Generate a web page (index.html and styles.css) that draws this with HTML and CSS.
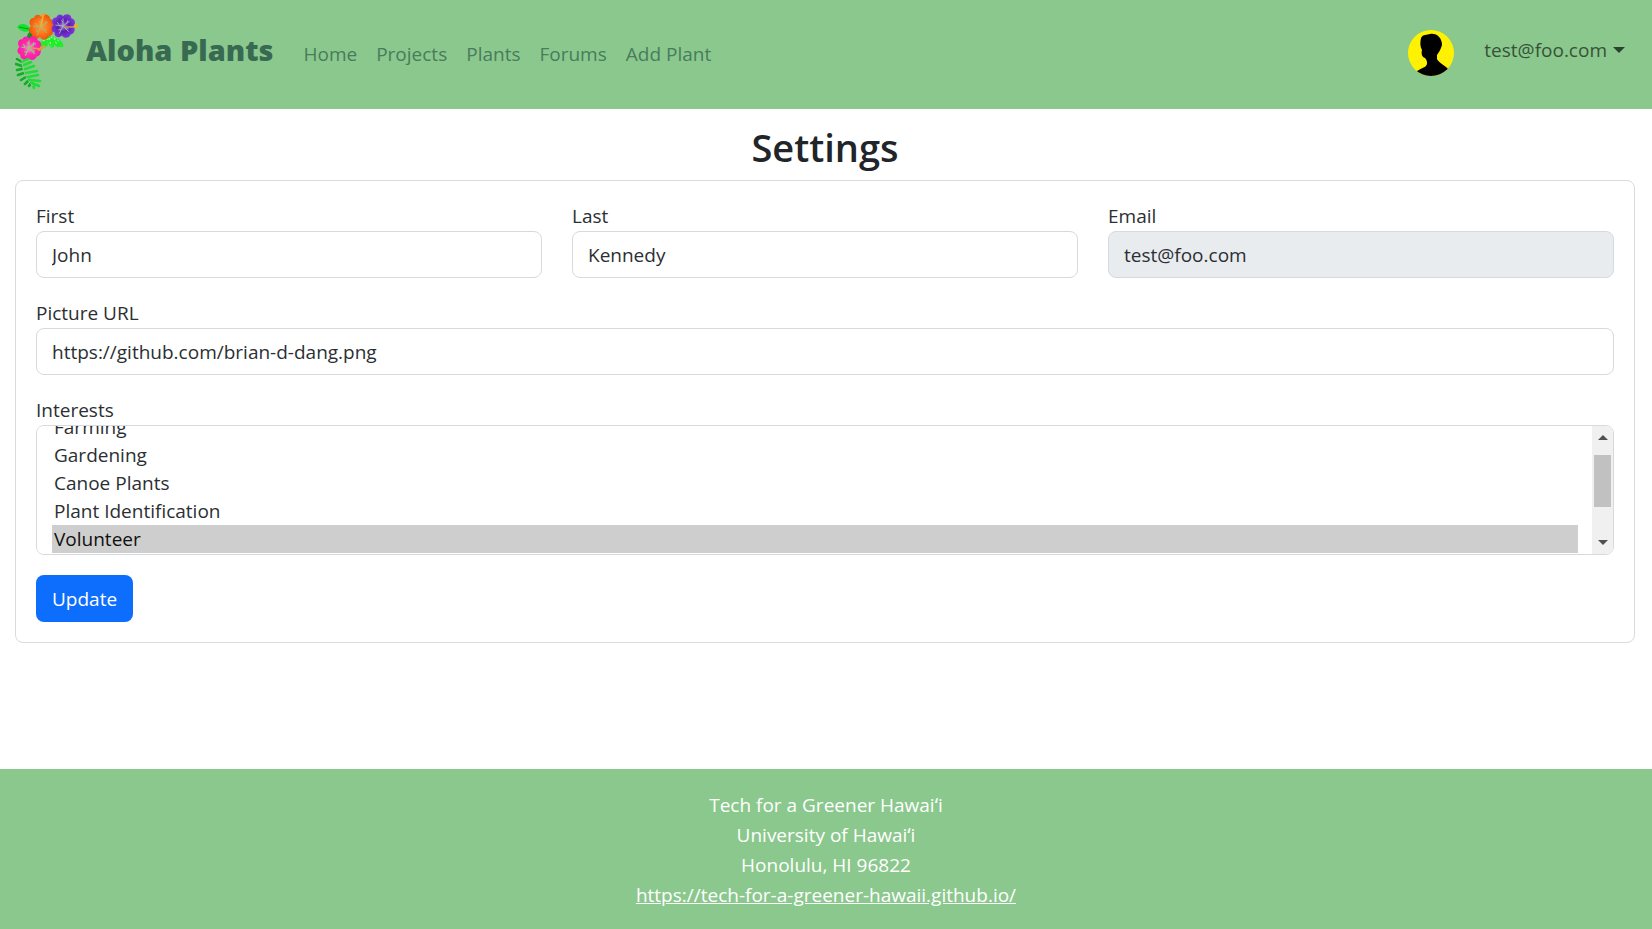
FILE: index.html
```html
<!DOCTYPE html>
<html lang="en">
<head>
<meta charset="utf-8">
<meta name="viewport" content="width=device-width, initial-scale=1">
<title>Aloha Plants</title>
<link rel="stylesheet" href="styles.css">
</head>
<body>
<header class="navbar">
  <a class="brand" href="#">
    <svg class="logo" viewBox="15 12 64 78" aria-hidden="true">
      <defs>
        <radialGradient id="orange"><stop offset="0" stop-color="#f8a040"/><stop offset=".5" stop-color="#ff7a1c"/><stop offset="1" stop-color="#f0560c"/></radialGradient>
        <radialGradient id="purple"><stop offset="0" stop-color="#a98be0"/><stop offset=".45" stop-color="#5a1fb0"/><stop offset="1" stop-color="#7c35dc"/></radialGradient>
        <radialGradient id="pink"><stop offset="0" stop-color="#ff9ad8"/><stop offset=".5" stop-color="#ff2cae"/><stop offset="1" stop-color="#ff1aa8"/></radialGradient>
        <path id="bloom" d="M0-10C2-14 9-13 9-8 13-8 14-2 11 0 14 3 12 9 8 9 7 13 1 14-1 10-5 14-10 11-9 7-13 6-13 1-10-1-13-4-11-10-7-9-6-13-1-13 0-10Z"/>
        <path id="veins" d="M0 0 0-8M0 0 7-5M0 0 6 6M0 0-4 8M0 0-8-1M0-4-2-6M4-3 5-6M3 3 6 3M-2 4-5 4M-4-1-6-4"/>
      </defs>
      <path fill="#12e32c" d="M17 27C20 23 26 23 30 28L30 31C25 33 20 31 17 27Z"/>
      <path fill="#11982c" d="M34 31C30 30 26 34 27 40L33 41C36 37 36 34 34 31Z"/>
      <path stroke="#087d1d" stroke-width=".7" fill="none" d="M19 27 29 29M32 32 29 39"/>
      <g fill="#1fee2b"><ellipse cx="47" cy="38" rx="3" ry="5" transform="rotate(35 47 38)"/><ellipse cx="51" cy="42" rx="3" ry="6" transform="rotate(-18 51 42)"/><ellipse cx="56" cy="42" rx="3" ry="6" transform="rotate(-35 56 42)"/><ellipse cx="60" cy="43" rx="2" ry="5" transform="rotate(-35 60 43)"/><ellipse cx="44" cy="44" rx="4" ry="3"/></g>
      <path fill="none" stroke="#b9f7a5" stroke-dasharray="2 2" d="M43 41 53 37 60 42M49 38 51 46M54 38 57 45"/>
      <g fill="none" stroke-linecap="round" stroke-width="2.6">
        <path stroke="#0faf25" d="M22 62 17 59M22 66 16 64M22 69 17 70M24 73 18 75M26 77 21 80M29 80 25 84M31 83 29 86"/>
        <path stroke="#20dc36" d="M23 61 28 59M24 65 31 62M25 69 34 66M26 73 37 71M28 77 38 75M30 80 40 81M32 83 39 86M33 85 34 88"/>
      </g>
      <path fill="none" stroke="#8bc88d" d="M22 60C22 70 26 79 33 86"/>
      <g transform="translate(41 27)"><use href="#bloom" fill="url(#orange)"/><use href="#veins" stroke="#a4ba72"/></g>
      <path stroke="#f3b12e" stroke-width="1.5" fill="none" d="M41 27 43 16"/><circle cx="43" cy="15" r="1.8" fill="#ff9a1c"/>
      <g transform="translate(63 26) scale(.94)"><use href="#bloom" fill="url(#purple)"/><use href="#veins" stroke="#a6b5b5"/></g>
      <path stroke="#d99155" stroke-width="1.5" fill="none" d="M64 27 74 27"/><circle cx="76" cy="26" r="2" fill="#ffab16"/>
      <g transform="translate(29 48) scale(.95)"><use href="#bloom" fill="url(#pink)"/><use href="#veins" stroke="#9dbf88" stroke-width="1.3"/></g>
      <path stroke="#dd9554" stroke-width="1.5" fill="none" d="M30 48 42 49"/><path stroke="#f2942a" stroke-width="3" stroke-dasharray="2 1" fill="none" d="M38 50 45 46"/>
    </svg>
    <span>Aloha Plants</span>
  </a>
  <nav class="links">
    <a href="#">Home</a><a href="#">Projects</a><a href="#">Plants</a><a href="#">Forums</a><a href="#">Add Plant</a>
  </nav>
  <div class="account">
    <svg class="avatar" viewBox="0 0 46 46" aria-hidden="true">
      <defs><clipPath id="round"><circle cx="23" cy="23" r="23"/></clipPath></defs>
      <g clip-path="url(#round)"><path fill="#fff200" d="M0 0H46V46H0Z"/>
      <path fill="none" stroke="#f5dc4a" stroke-width=".6" d="M4 34 16 27M32 28H46M35 20 42 11"/>
      <path d="M13 8C15 4 19 5 22 4 29 3 34 8 34 15 33 19 31 22 29 25V29C31 33 37 35 41 40L36 46H12L8 42C12 38 18 38 19 34 19 32 19 30 17 28 14 27 13 24 14 20 12 17 12 12 13 8Z"/></g>
    </svg>
    <button class="user" type="button">test@foo.com<span class="caret"></span></button>
  </div>
</header>
<main>
  <h1>Settings</h1>
  <form class="card">
    <div class="row">
      <div class="field"><label for="first">First</label><input id="first" type="text" value="John"></div>
      <div class="field"><label for="last">Last</label><input id="last" type="text" value="Kennedy"></div>
      <div class="field"><label for="email">Email</label><input id="email" type="email" value="test@foo.com" readonly></div>
    </div>
    <div class="field"><label for="picture">Picture URL</label><input id="picture" type="text" value="https://github.com/brian-d-dang.png"></div>
    <div class="field"><label for="interests">Interests</label>
      <div class="listbox">
        <select id="interests" multiple>
          <option>Farming</option><option>Gardening</option><option>Canoe Plants</option><option>Plant Identification</option><option selected>Volunteer</option>
        </select>
        <div class="scrollbar" aria-hidden="true"><span class="up"></span><span class="thumb"></span><span class="down"></span></div>
      </div>
    </div>
    <button class="update" type="button">Update</button>
  </form>
</main>
<footer>
  <div>Tech for a Greener Hawaiʻi</div>
  <div>University of Hawaiʻi</div>
  <div>Honolulu, HI 96822</div>
  <a href="https://tech-for-a-greener-hawaii.github.io/">https://tech-for-a-greener-hawaii.github.io/</a>
</footer>
<script src="script.js"></script>
</body>
</html>
```
FILE: styles.css
```css
* { box-sizing: border-box; }
body {
  margin: 0;
  min-height: 100vh;
  display: flex;
  flex-direction: column;
  background: #fff;
  color: #2b2f33;
  font-family: "Segoe UI", "Open Sans", "Noto Sans", sans-serif;
  font-size: 19px;
  line-height: 30px;
}
input, select, button { font: inherit; color: inherit; }
.navbar {
  display: flex;
  align-items: center;
  height: 109px;
  padding: 0 27px 8px 15px;
  background: #8bc88d;
}
.brand {
  display: flex;
  align-items: center;
  gap: 7px;
  color: #386a52;
  font-size: 29px;
  font-weight: 800;
  text-decoration: none;
}
.brand span { padding-bottom: 2px; }
.logo { width: 64px; height: 78px; }
.links { display: flex; gap: 19px; margin-left: 30px; padding-top: 6px; }
.links a { color: #487c5c; text-decoration: none; }
.account { display: flex; align-items: center; gap: 30px; margin-left: auto; }
.avatar { width: 46px; height: 46px; margin-top: 4px; }
.user {
  display: flex;
  align-items: center;
  gap: 6px;
  padding: 0 0 2px;
  border: 0;
  background: none;
  color: #385239;
}
.caret {
  border: 6px solid transparent;
  border-top-color: #2b422d;
  border-bottom: 0;
}
main { padding: 14px 17px 0 15px; }
h1 {
  margin: 0 0 9px;
  color: #212529;
  font-size: 38px;
  font-weight: 600;
  line-height: 48px;
  text-align: center;
}
.card {
  display: flex;
  flex-direction: column;
  gap: 20px;
  padding: 20px;
  border: 1px solid #d9dbdd;
  border-radius: 8px;
}
.row { display: grid; grid-template-columns: repeat(3, 1fr); gap: 30px; }
.field { display: flex; flex-direction: column; }
input {
  width: 100%;
  height: 47px;
  padding: 0 15px;
  border: 1px solid #d5dae0;
  border-radius: 8px;
  background: #fff;
}
input:read-only { background: #e9ecef; }
.listbox {
  position: relative;
  height: 130px;
  border: 1px solid #d5dae0;
  border-radius: 8px;
  overflow: hidden;
}
select {
  display: block;
  width: 100%;
  height: 100%;
  padding: 8px 35px 64px 15px;
  border: 0;
  background: #fff;
  overflow-y: scroll;
  scrollbar-width: none;
}
option { height: 28px; padding: 1px 2px 0; line-height: 28px; }
.scrollbar {
  position: absolute;
  top: 0;
  right: 0;
  bottom: 0;
  width: 21px;
  display: flex;
  flex-direction: column;
  align-items: center;
  padding: 9px 0;
  background: #f0f0f0;
  pointer-events: none;
}
.up, .down { border: 5px solid transparent; }
.up { border-top: 0; border-bottom-color: #505050; }
.down { margin-top: auto; border-bottom: 0; border-top-color: #505050; }
.thumb { width: 17px; height: 52px; margin-top: 15px; background: #c1c1c1; }
.update {
  align-self: flex-start;
  height: 47px;
  padding: 0 16px;
  border: 0;
  border-radius: 8px;
  background: #0d6efd;
  color: #fff;
}
footer {
  margin-top: auto;
  padding: 21px 15px 19px;
  background: #8bc88d;
  color: #fff;
  text-align: center;
}
footer a { color: inherit; }
```
FILE: script.js
```js
document.getElementById("interests").scrollTop = 21;
```
